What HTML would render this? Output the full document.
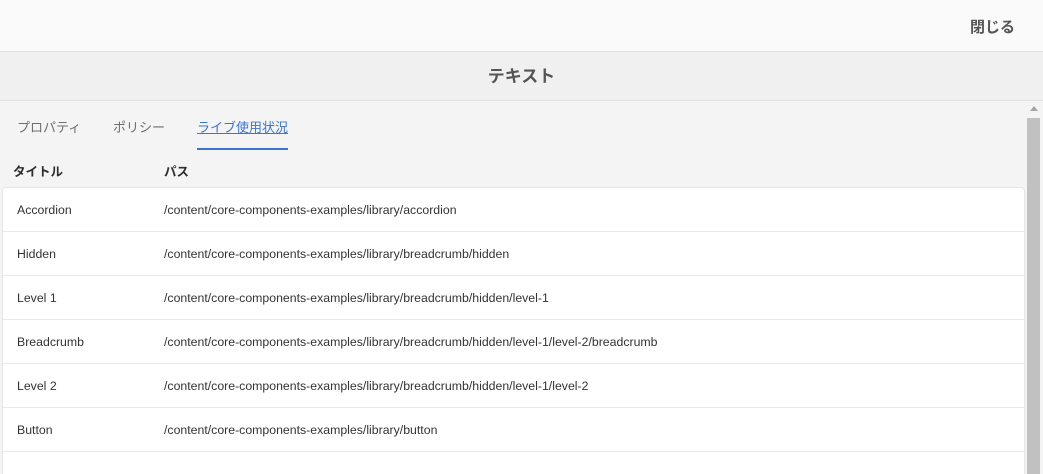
<!DOCTYPE html>
<html><head><meta charset="utf-8"><style>
*{margin:0;padding:0;box-sizing:border-box}
html,body{width:1043px;height:474px;overflow:hidden}
body{background:#f4f4f4;font-family:"Liberation Sans","Noto Sans CJK JP",sans-serif;position:relative;color:#2c2c2c}
.top{position:absolute;left:0;top:0;width:1043px;height:52px;background:#fafafa;border-bottom:1px solid #e1e1e1}
.close{position:absolute;right:28px;top:16px;font-size:15px;font-weight:bold;color:#555}
.title{position:absolute;left:0;top:52px;width:1043px;height:49px;background:#f0f0f0;border-bottom:1px solid #e1e1e1;text-align:center;font-size:17px;font-weight:bold;color:#555;line-height:49px}
.tab{position:absolute;top:117px;font-size:13px;color:#6e6e6e}
.ul{position:absolute;left:197px;top:148px;width:91px;height:2px;background:#3a75d4}
.h{position:absolute;top:161px;font-size:12.5px;font-weight:bold;color:#2c2c2c}
.card{position:absolute;left:2px;top:187px;width:1023px;height:300px;background:#fff;border:1px solid #e6e6e6;border-radius:4px}
.row{height:44px;border-bottom:1px solid #e8e8e8;position:relative;font-size:12.3px;color:#333}
.row span{position:absolute;top:15px}
.sb{position:absolute;left:1027px;top:118px;width:13px;height:356px;background:#c1c1c1}
.arr{position:absolute;left:1030px;top:106px;width:0;height:0;border-left:4px solid transparent;border-right:4px solid transparent;border-bottom:5px solid #a3a3a3}
</style></head><body>
<div class="top"><div class="close">閉じる</div></div>
<div class="title">テキスト</div>
<div class="tab" style="left:17px">プロパティ</div>
<div class="tab" style="left:113px">ポリシー</div>
<div class="tab" style="left:197px;color:#3a75d4;text-decoration:underline">ライブ使用状況</div>
<div class="ul"></div>
<div class="h" style="left:13px">タイトル</div>
<div class="h" style="left:164px">パス</div>
<div class="card">
<div class="row"><span style="left:14px">Accordion</span><span style="left:161px">/content/core-components-examples/library/accordion</span></div>
<div class="row"><span style="left:14px">Hidden</span><span style="left:161px">/content/core-components-examples/library/breadcrumb/hidden</span></div>
<div class="row"><span style="left:14px">Level 1</span><span style="left:161px">/content/core-components-examples/library/breadcrumb/hidden/level-1</span></div>
<div class="row"><span style="left:14px">Breadcrumb</span><span style="left:161px">/content/core-components-examples/library/breadcrumb/hidden/level-1/level-2/breadcrumb</span></div>
<div class="row"><span style="left:14px">Level 2</span><span style="left:161px">/content/core-components-examples/library/breadcrumb/hidden/level-1/level-2</span></div>
<div class="row"><span style="left:14px">Button</span><span style="left:161px">/content/core-components-examples/library/button</span></div>
</div>
<div class="arr"></div>
<div class="sb"></div>
</body></html>
